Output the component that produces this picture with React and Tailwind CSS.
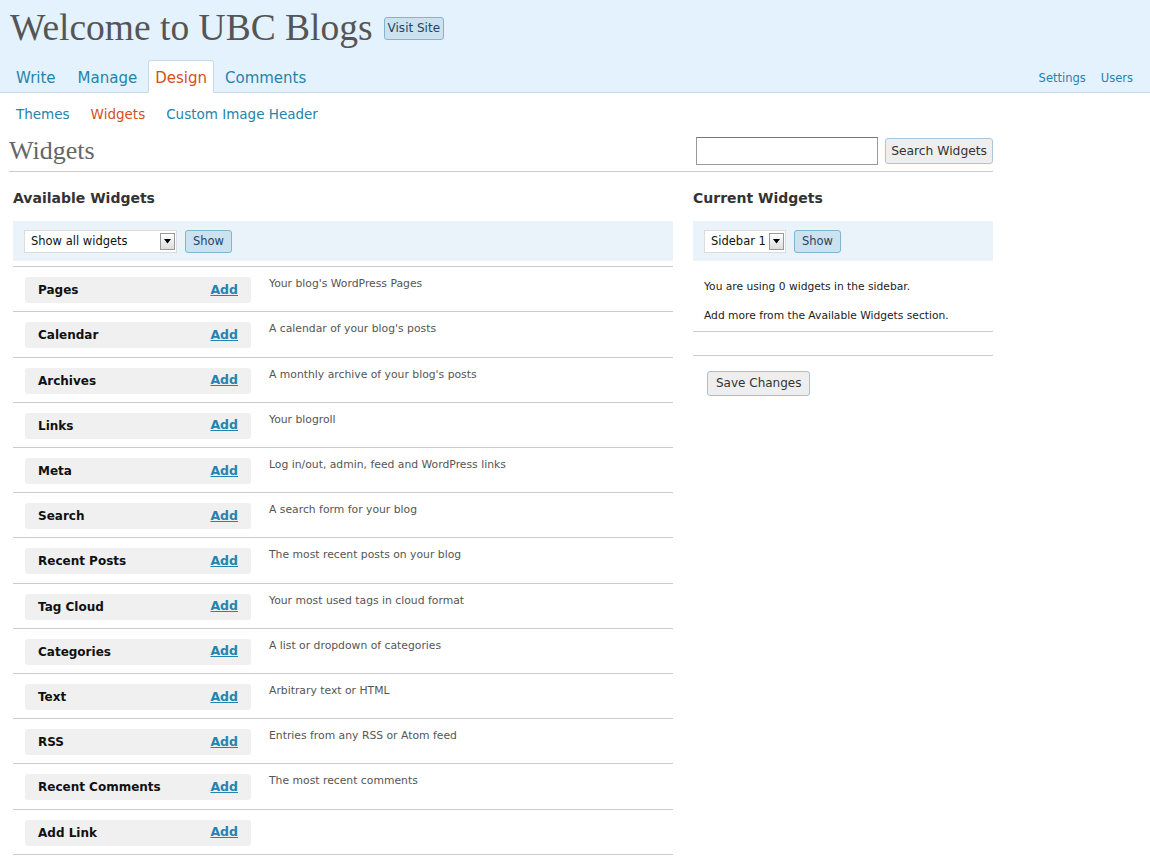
import React from 'react';

const widgets = [
  { name: 'Pages', desc: "Your blog's WordPress Pages" },
  { name: 'Calendar', desc: "A calendar of your blog's posts" },
  { name: 'Archives', desc: "A monthly archive of your blog's posts" },
  { name: 'Links', desc: 'Your blogroll' },
  { name: 'Meta', desc: 'Log in/out, admin, feed and WordPress links' },
  { name: 'Search', desc: 'A search form for your blog' },
  { name: 'Recent Posts', desc: 'The most recent posts on your blog' },
  { name: 'Tag Cloud', desc: 'Your most used tags in cloud format' },
  { name: 'Categories', desc: 'A list or dropdown of categories' },
  { name: 'Text', desc: 'Arbitrary text or HTML' },
  { name: 'RSS', desc: 'Entries from any RSS or Atom feed' },
  { name: 'Recent Comments', desc: 'The most recent comments' },
  { name: 'Add Link', desc: '' },
];

const SelectBox = ({ label, width }) => (
  <div className={`flex items-center justify-between h-[23px] bg-white border border-[#dcdcdc] pl-[6px] pr-[1px] ${width}`}>
    <span className="text-[11.5px] text-[#111] whitespace-nowrap">{label}</span>
    <span className="w-[15px] h-[17px] border border-[#999] bg-gradient-to-b from-white to-[#ddd] flex items-center justify-center">
      <svg width="7" height="5" viewBox="0 0 7 5"><path d="M0 0h7L3.5 4.5z" fill="#000" /></svg>
    </span>
  </div>
);

const BlueButton = ({ children }) => (
  <button className="h-[23px] px-[7px] bg-[#cee1ef] border border-[#80b5d0] rounded-[3px] text-[11.5px] text-[#246] leading-none">
    {children}
  </button>
);

const App = () => {
  return (
    <div className="min-h-[862px] bg-white font-['DejaVu_Sans','Liberation_Sans',sans-serif] text-[#333]">
      {/* Header */}
      <div className="bg-[#e4f2fd] border-b border-[#c6d9e9] h-[93px] flex flex-col">
        <div className="flex items-center pl-[10px] pt-[3px] h-[52px]">
          <h1 className="font-['Liberation_Serif','DejaVu_Serif',serif] text-[37.5px] text-[#555] leading-none">
            Welcome to UBC Blogs
          </h1>
          <button className="ml-[11px] mt-[1px] h-[23px] px-[3px] bg-[#cee1ef] border border-[#80b5d0] rounded-[3px] text-[12px] text-[#246] leading-none">
            Visit Site
          </button>
        </div>
        <div className="flex items-end justify-between mt-auto">
          <div className="flex items-end pl-[5px] text-[15px]">
            <a className="px-[11px] pb-[3px] text-[#2583ad]">Write</a>
            <a className="px-[11px] pb-[3px] text-[#2583ad]">Manage</a>
            <a className="px-[6px] pt-[6px] pb-[3px] -mb-px bg-white border border-[#c6d9e9] border-b-white rounded-t-[3px] text-[#d54e21]">Design</a>
            <a className="px-[11px] pb-[3px] text-[#2583ad]">Comments</a>
          </div>
          <div className="flex gap-[15px] pr-[17px] pb-[5px] text-[11.5px] text-[#2583ad]">
            <a>Settings</a>
            <a>Users</a>
          </div>
        </div>
      </div>

      {/* Submenu */}
      <div className="flex gap-[21px] pl-[16px] pt-[11px] text-[13.5px] text-[#2583ad]">
        <a>Themes</a>
        <a className="text-[#d54e21]">Widgets</a>
        <a>Custom Image Header</a>
      </div>

      <div className="w-[984px] ml-[9px]">
        {/* Title row */}
        <div className="flex items-end justify-between border-b border-[#ccc] h-[48px] pb-[5px]">
          <h2 className="font-['Liberation_Serif','DejaVu_Serif',serif] text-[26px] text-[#666] leading-none pb-[2px]">Widgets</h2>
          <div className="flex items-center gap-[7px] pb-[1px]">
            <input className="w-[182px] h-[28px] border border-[#999] border-t-[#777] bg-white" />
            <button className="h-[26px] px-[5px] bg-[#eee] border border-[#aac6dc] rounded-[3px] text-[12.3px] text-[#333] leading-none">
              Search Widgets
            </button>
          </div>
        </div>

        <div className="flex gap-[20px]">
          {/* Available widgets */}
          <div className="w-[660px] ml-[4px]">
            <h3 className="font-bold text-[14px] text-[#333] mt-[19px] mb-[16px] leading-none">Available Widgets</h3>
            <div className="bg-[#eaf3fa] h-[40px] flex items-center gap-[8px] px-[11px]">
              <SelectBox label="Show all widgets" width="w-[153px]" />
              <BlueButton>Show</BlueButton>
            </div>
            <div className="mt-[5px] border-t border-[#ccc]">
              {widgets.map((w) => (
                <div key={w.name} className="h-[45.2px] border-b border-[#ccc] flex items-start pt-[10px] pl-[12px]">
                  <div className="w-[226px] h-[26px] bg-[#f0f0f0] rounded-[3px] flex items-center justify-between pl-[13px] pr-[13px]">
                    <span className="font-bold text-[12px] text-[#111]">{w.name}</span>
                    <a className="font-bold text-[12.5px] text-[#2583ad] underline">Add</a>
                  </div>
                  <p className="ml-[18px] -mt-[1px] text-[10.8px] text-[#555]">{w.desc}</p>
                </div>
              ))}
            </div>
          </div>

          {/* Current widgets */}
          <div className="w-[300px]">
            <h3 className="font-bold text-[14px] text-[#333] mt-[19px] mb-[16px] leading-none">Current Widgets</h3>
            <div className="bg-[#eaf3fa] h-[40px] flex items-center gap-[8px] px-[11px]">
              <SelectBox label="Sidebar 1" width="w-[82px]" />
              <BlueButton>Show</BlueButton>
            </div>
            <div className="border-b border-[#ccc] pl-[11px] pt-[18px] pb-[7px] text-[10.7px] text-[#222] space-y-[13px]">
              <p>You are using 0 widgets in the sidebar.</p>
              <p>Add more from the Available Widgets section.</p>
            </div>
            <div className="border-b border-[#ccc] h-[24px]" />
            <div className="pl-[14px] pt-[14px]">
              <button className="h-[25px] px-[8px] bg-[#eee] border border-[#9ec2dc] rounded-[3px] text-[12px] text-[#333] leading-none">
                Save Changes
              </button>
            </div>
          </div>
        </div>
      </div>
    </div>
  );
};

export default App;
